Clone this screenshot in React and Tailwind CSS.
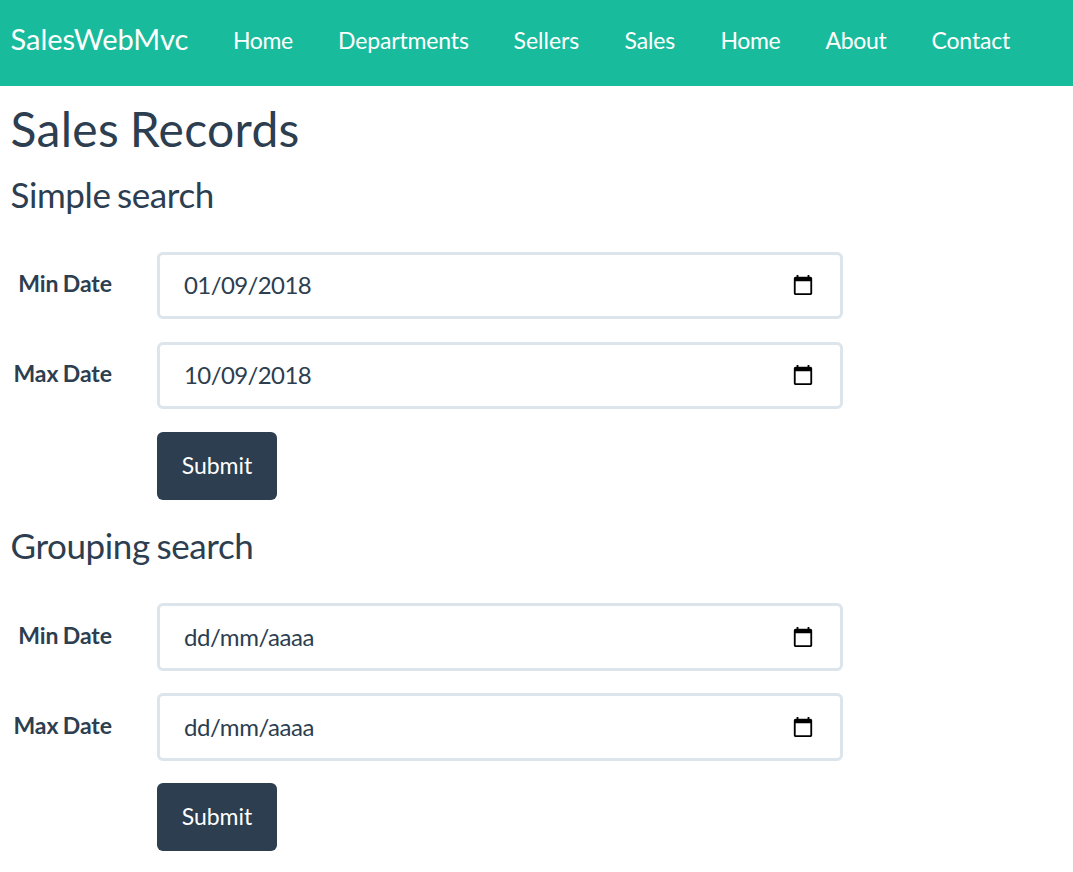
const LINKS = [
  ["Home", "w-[60px] tracking-[-0.35px]"],
  ["Departments", "w-[130.5px] tracking-[-0.15px]"],
  ["Sellers", "w-[66px]"],
  ["Sales", "w-[51px] tracking-[-0.15px]"],
  ["Home", "w-[60px] tracking-[-0.35px]"],
  ["About", "w-[61px] tracking-[-0.3px]"],
  ["Contact", "w-[79px] tracking-[-0.15px]"],
];

function CalendarIcon() {
  return (
    <svg width="22" height="22" viewBox="0 0 24 24" fill="#000">
      <path d="M20 3h-1V1h-2v2H7V1H5v2H4c-1.1 0-2 .9-2 2v16c0 1.1.9 2 2 2h16c1.1 0 2-.9 2-2V5c0-1.1-.9-2-2-2zm0 18H4V8h16v13z" />
    </svg>
  );
}

function DateField({ label, value, filled }) {
  return (
    <div className="flex h-[90px]">
      <label className={`${filled ? "pt-[14px]" : "pt-[15px]"} w-[112px] mr-[45px] text-right text-[23px] leading-[34px] font-bold tracking-[-0.05px] [word-spacing:-1.2px]`}>{label}</label>
      <div className={`${filled ? "h-[67px] pb-[2px]" : "h-[68px] pb-px"} w-[686px] border-[3px] border-[#dce4ec] rounded-[6px] bg-white flex items-center justify-between pl-6 pr-[26px] text-[24px]`}>
        <span className={filled ? "tracking-[-0.6px]" : "tracking-[-0.4px]"}>{value}</span>
        <CalendarIcon />
      </div>
    </div>
  );
}

function SearchForm({ value1, value2, filled }) {
  return (
    <form className="flex flex-col">
      <DateField label="Min Date" value={value1} filled={filled} />
      <DateField label="Max Date" value={value2} filled={filled} />
      <button type="button" className="ml-[157px] w-[120px] h-[68px] pb-[2px] rounded-[6px] bg-[#2c3e50] text-white text-[23px]">Submit</button>
    </form>
  );
}

export default function App() {
  return (
    <div className="w-[1073px] h-[872px] overflow-hidden bg-white text-[#2c3e50] font-['Lato',sans-serif]">
      <nav className="h-[86px] bg-[#18bc9c] text-white flex pl-[10.5px]">
        <span className="w-[178px] text-[29px] leading-[78px] whitespace-nowrap">SalesWebMvc</span>
        <div className="flex gap-[45px] ml-[44.5px] text-[23px] leading-[80px]">
          {LINKS.map(([t, w], i) => (
            <a key={i} className={w + " whitespace-nowrap"}>{t}</a>
          ))}
        </div>
      </nav>
      <main>
        <h2 className="pl-[10.5px] mt-[16px] text-[48px] leading-[54px] tracking-[0.32px] [word-spacing:-2px]">Sales Records</h2>
        <h3 className="pl-[10.5px] mt-[18px] mb-[37px] text-[35px] leading-[41px] tracking-[-0.4px] [word-spacing:-2px]">Simple search</h3>
        <SearchForm value1="01/09/2018" value2="10/09/2018" filled />
        <h3 className="pl-[10.5px] mt-[25px] mb-[37px] text-[35px] leading-[41px] tracking-[-0.4px] [word-spacing:-1.8px]">Grouping search</h3>
        <SearchForm value1="dd/mm/aaaa" value2="dd/mm/aaaa" />
      </main>
    </div>
  );
}
